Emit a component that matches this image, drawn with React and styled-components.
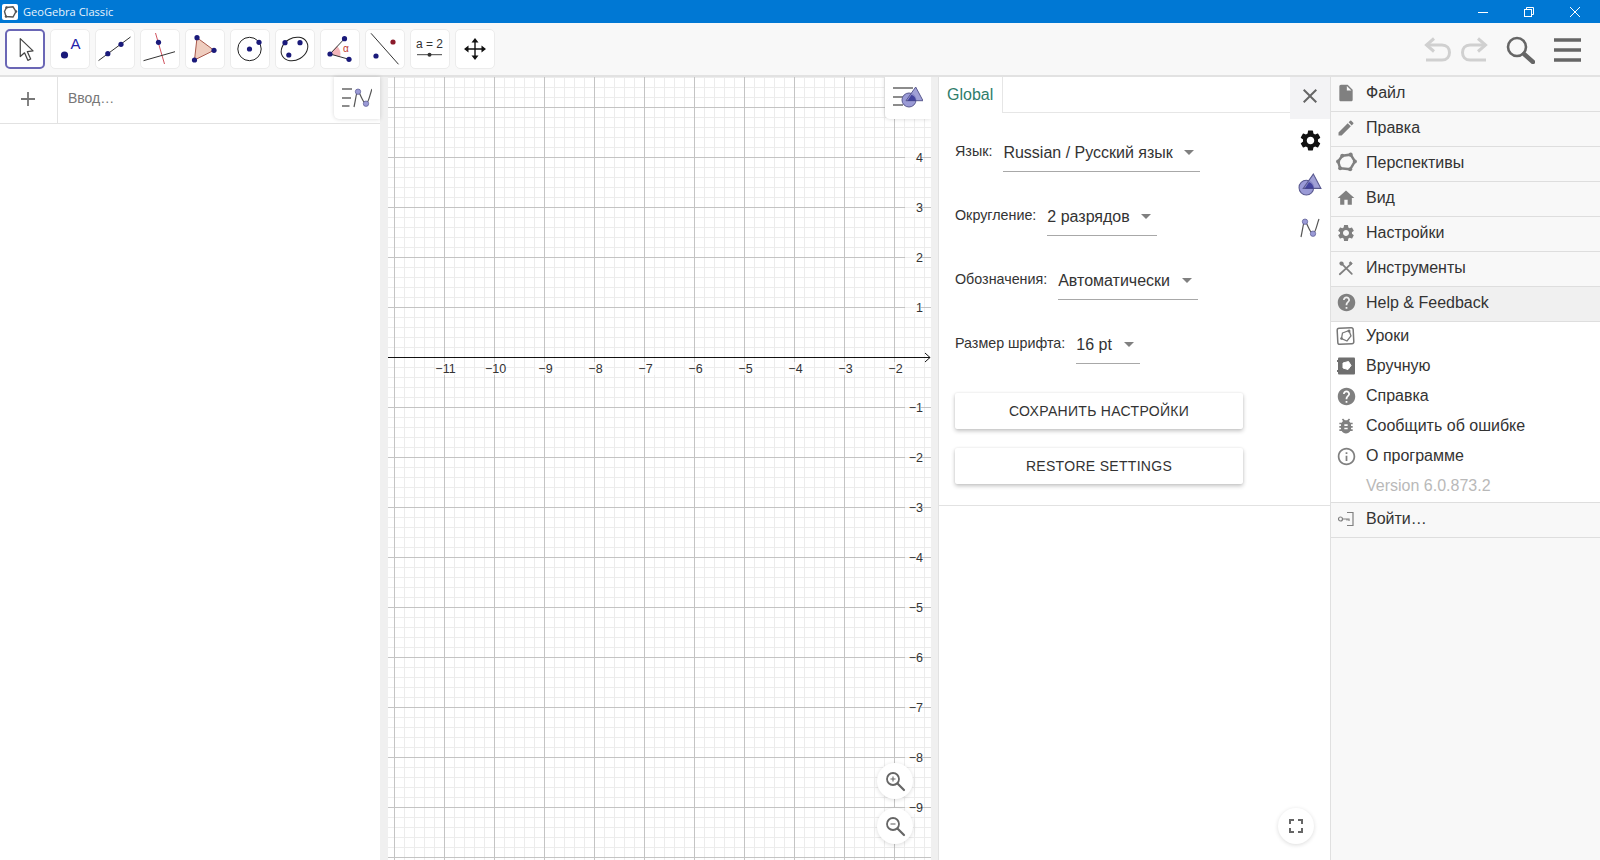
import React from 'react';
import styled, { createGlobalStyle } from 'styled-components';
import { MdInsertDriveFile, MdEdit, MdHome, MdSettings, MdHelp, MdBugReport, MdInfoOutline, MdClose } from 'react-icons/md';

const GlobalStyle = createGlobalStyle`
  html, body { margin: 0; padding: 0; height: 100%; overflow: hidden; background: #fff; }
  #root { height: 100%; }
  * { box-sizing: border-box; }
`;

const NAVY = '#1a1a7a';
const PURPLE = '#9a9ad6';

const Page = styled.div`
  width: 1600px;
  height: 860px;
  display: flex;
  flex-direction: column;
  font-family: "Liberation Sans", Arial, sans-serif;
  color: #333;
`;

const TitleBar = styled.div`
  height: 23px;
  background: #0078d4;
  display: flex;
  align-items: center;
  color: #fff;
  padding: 0 2px;
`;

const TitleText = styled.span`
  font-family: "Open Sans", "Noto Sans", sans-serif;
  font-size: 11.1px;
  margin-left: 5px;
  color: #e8f3fb;
`;

const WindowButtons = styled.div`
  margin-left: auto;
  display: flex;
  align-items: center;
`;

const WindowButton = styled.div`
  width: 46px;
  height: 23px;
  display: flex;
  align-items: center;
  justify-content: center;
`;

const Toolbar = styled.div`
  height: 54px;
  background: #f8f8f8;
  border-bottom: 2px solid #e2e2e2;
  display: flex;
  align-items: flex-start;
  padding: 6px 19px 0 5px;
`;

const ToolGroup = styled.div`
  display: flex;
  gap: 5px;
`;

const ToolButton = styled.div`
  width: 40px;
  height: 40px;
  background: #fff;
  border-radius: 5px;
  border: ${p => (p.$active ? '2px solid #6a66b5' : '1px solid #ececec')};
  display: flex;
  align-items: center;
  justify-content: center;
  flex: none;
`;

const ActionGroup = styled.div`
  margin-left: auto;
  display: flex;
  align-items: center;
  height: 40px;
  margin-top: 1px;
`;

const ActionIcon = styled.svg`
  display: block;
  margin-left: ${p => p.$gap || 0}px;
`;

const Main = styled.div`
  flex: 1;
  display: flex;
  min-height: 0;
`;

const AlgebraPanel = styled.div`
  width: 380px;
  background: #fff;
  flex: none;
`;

const InputRow = styled.div`
  height: 47px;
  display: flex;
  border-bottom: 1px solid #e2e2e2;
  position: relative;
`;

const PlusCell = styled.div`
  width: 58px;
  border-right: 1px solid #e2e2e2;
  display: flex;
  align-items: center;
  justify-content: center;
  padding: 0 1px 2px 0;
`;

const InputHint = styled.div`
  padding-left: 10px;
  line-height: 43px;
  font-size: 14px;
  color: #777;
`;

const StyleButton = styled.div`
  position: absolute;
  top: 0;
  right: 0;
  width: 46px;
  height: 42px;
  background: #fff;
  border-bottom-left-radius: 5px;
  box-shadow: 0 0 4px rgba(0, 0, 0, 0.16);
  display: flex;
  align-items: center;
  justify-content: center;
`;

const Splitter = styled.div`
  width: ${p => p.$width}px;
  background: #f0f0f0;
  flex: none;
`;

const GraphPanel = styled.div`
  width: 543px;
  flex: none;
  position: relative;
  overflow: hidden;
  background: #fff;
`;

const GraphCanvas = styled.svg`
  display: block;
  font-family: "Liberation Sans", Arial, sans-serif;
  font-size: 12.5px;
  fill: #333;
`;

const RoundButton = styled.div`
  position: absolute;
  left: ${p => p.$left}px;
  top: ${p => p.$top}px;
  width: 36px;
  height: 36px;
  border-radius: 50%;
  background: #fff;
  box-shadow: 0 1px 4px rgba(0, 0, 0, 0.14);
  display: flex;
  align-items: center;
  justify-content: center;
`;

const SettingsPanel = styled.div`
  width: 392px;
  flex: none;
  position: relative;
  background: #fff;
  border-left: 1px solid #e2e2e2;
`;

const SettingsTop = styled.div`
  height: 429px;
  display: flex;
  border-bottom: 1px solid #e2e2e2;
`;

const SettingsBody = styled.div`
  flex: 1;
`;

const TabBar = styled.div`
  height: 36px;
  border-bottom: 1px solid #e6e6e6;
  display: flex;
  align-items: flex-end;
`;

const Tab = styled.div`
  width: 64px;
  height: 36px;
  background: #fff;
  border-right: 1px solid #e6e6e6;
  margin-bottom: -1px;
  padding-left: 8px;
  font-size: 16px;
  line-height: 35px;
  color: #2f7d6b;
`;

const Form = styled.div`
  padding: 19px 0 0 16px;
  display: flex;
  flex-direction: column;
  gap: 24px;
`;

const FormRow = styled.div`
  display: flex;
  height: 40px;
`;

const FormLabel = styled.div`
  font-size: 14.3px;
  line-height: 38px;
  margin-right: 11px;
  color: #333;
`;

const Select = styled.div`
  width: ${p => p.$width}px;
  height: 40px;
  border-bottom: 1px solid #a8a8a8;
  display: flex;
  align-items: center;
  justify-content: space-between;
  padding: 0 6px 0 0;
  font-size: 16px;
  color: #333;
`;

const SelectText = styled.span`
  padding-top: 2px;
`;

const Caret = styled.span`
  width: 0;
  height: 0;
  border-left: 5px solid transparent;
  border-right: 5px solid transparent;
  border-top: 5px solid #808080;
  margin-top: 2px;
`;

const ActionButtons = styled.div`
  display: flex;
  flex-direction: column;
  gap: 19px;
  margin-top: 5px;
`;

const FlatButton = styled.button`
  width: 288px;
  height: 36px;
  background: #fff;
  border: none;
  border-radius: 2px;
  box-shadow: 0 2px 4px rgba(0, 0, 0, 0.24), 0 0 2px rgba(0, 0, 0, 0.08);
  font-family: "Liberation Sans", Arial, sans-serif;
  font-size: 14px;
  letter-spacing: 0.3px;
  color: #333;
  padding: 0;
`;

const SideColumn = styled.div`
  width: 40px;
  flex: none;
  display: flex;
  flex-direction: column;
  align-items: center;
`;

const CloseButton = styled.div`
  width: 40px;
  height: 42px;
  background: #f3f3f5;
  display: flex;
  align-items: center;
  justify-content: center;
  padding-bottom: 4px;
`;

const SideIcon = styled.div`
  height: 43.5px;
  display: flex;
  align-items: center;
  justify-content: center;
  color: #111;
`;

const MenuPanel = styled.div`
  flex: 1;
  background: #f8f8f8;
  border-left: 1px solid #e0e0e0;
`;

const MenuRow = styled.div`
  height: 35px;
  display: flex;
  align-items: center;
  background: ${p => (p.$hover ? '#f0f0f0' : 'transparent')};
  border-bottom: 1px solid #dedede;
  padding-bottom: 3px;
  font-size: 16px;
  color: #333;
`;

const SubMenu = styled.div`
  background: #fff;
  height: 181px;
  border-bottom: 1px solid #dedede;
`;

const SubRow = styled.div`
  height: 30px;
  display: flex;
  align-items: center;
  padding-bottom: 2px;
  font-size: 16px;
  color: ${p => (p.$muted ? '#b9b9b9' : '#333')};
`;

const IconCell = styled.span`
  width: 30px;
  height: 20px;
  margin-right: 5px;
  flex: none;
  display: flex;
  align-items: center;
  justify-content: center;
  color: #808080;
`;

const Dot = ({ x, y, r = 2.6, c = NAVY }) => <circle cx={x} cy={y} r={r} fill={c} />;

const toolIcons = [
  <svg width="38" height="38" viewBox="0 0 38 38" key="move">
    <path d="M14 8 L14 27 L18.5 23 L22 31 L25 29.5 L21.5 21.8 L27.5 21 Z" fill="#fff" stroke="#444" strokeWidth="1.3" strokeLinejoin="round" />
  </svg>,
  <svg width="38" height="38" viewBox="1 1 38 38" key="point">
    <Dot x={14.5} y={26} r={3.6} />
    <text x={20.5} y={20} fontSize="15" fontFamily="Liberation Sans, sans-serif" fill="#2222aa">A</text>
  </svg>,
  <svg width="38" height="38" viewBox="1 1 38 38" key="line">
    <path d="M3.5 31.6 L35.5 8" stroke="#333" strokeWidth="1" />
    <Dot x={12.8} y={24.7} />
    <Dot x={26} y={15.3} />
  </svg>,
  <svg width="38" height="38" viewBox="1 1 38 38" key="perp">
    <path d="M15.5 4 L24.5 35" stroke="#d0535f" strokeWidth="1" />
    <path d="M3.5 31.7 L35 22.7" stroke="#333" strokeWidth="1" />
    <Dot x={18.5} y={13.3} />
  </svg>,
  <svg width="38" height="38" viewBox="1 1 38 38" key="poly">
    <path d="M12 8.7 L29 21.3 L9.5 31 Z" fill="#efcdbf" stroke="#a8574a" strokeWidth="1" />
    <Dot x={12} y={8.7} />
    <Dot x={29} y={21.3} />
    <Dot x={9.5} y={31} />
  </svg>,
  <svg width="38" height="38" viewBox="1 1 38 38" key="circle">
    <circle cx="19.5" cy="20" r="11.7" fill="none" stroke="#222" strokeWidth="1" />
    <Dot x={19.5} y={20} />
    <Dot x={29} y={13.3} />
  </svg>,
  <svg width="38" height="38" viewBox="1 1 38 38" key="conic">
    <ellipse cx="19.5" cy="20" rx="14" ry="11" transform="rotate(-30 19.5 20)" fill="none" stroke="#222" strokeWidth="1" />
    <Dot x={10} y={13.7} />
    <Dot x={25} y={13.7} />
    <Dot x={13.8} y={26} />
  </svg>,
  <svg width="38" height="38" viewBox="1 1 38 38" key="angle">
    <path d="M10 25 L17 17 A11 11 0 0 1 20 28 Z" fill="#f4b6bb" />
    <path d="M24.5 9.7 L10 25 L29 30.3" fill="none" stroke="#333" strokeWidth="1" />
    <Dot x={10} y={25} />
    <Dot x={24.5} y={9.7} />
    <Dot x={29} y={30.3} />
    <text x={23} y={23} fontSize="10" fontFamily="Liberation Sans, sans-serif" fill="#c0392b">α</text>
  </svg>,
  <svg width="38" height="38" viewBox="1 1 38 38" key="reflect">
    <path d="M6 4.3 L33.5 35.3" stroke="#333" strokeWidth="1" />
    <Dot x={28} y={13} c="#8b1a2b" />
    <Dot x={11} y={27} />
  </svg>,
  <svg width="38" height="38" viewBox="1 1 38 38" key="slider">
    <text x={19.5} y={19} textAnchor="middle" fontSize="12" fontFamily="Liberation Sans, sans-serif" fill="#333">a = 2</text>
    <path d="M7 25.7 L32 25.7" stroke="#444" strokeWidth="1" />
    <Dot x={19.5} y={25.7} r={2} c="#333" />
  </svg>,
  <svg width="38" height="38" viewBox="1 1 38 38" key="pan">
    <path d="M20 11 V29 M11 20 H29" stroke="#111" strokeWidth="1.4" />
    <path d="M20 9 L16.5 13.5 H23.5 Z M20 31 L16.5 26.5 H23.5 Z M9 20 L13.5 16.5 V23.5 Z M31 20 L26.5 16.5 V23.5 Z" fill="#111" />
  </svg>,
];

const PentagonIcon = ({ size = 21, color = '#808080', width = 2.4 }) => (
  <svg width={size} height={size} viewBox="0 0 20 20">
    <path d="M6 3.5 L14 2.5 L18 9 L13.5 16.5 L4 15.5 L2 9 Z" fill="none" stroke={color} strokeWidth={width} strokeLinejoin="round" />
    {[[6, 3.5], [14, 2.5], [18, 9], [13.5, 16.5], [4, 15.5], [2, 9]].map(([x, y]) => (
      <circle key={`${x}-${y}`} cx={x} cy={y} r={width * 0.8} fill={color} />
    ))}
  </svg>
);

const ToolsIcon = () => (
  <svg width="16" height="16" viewBox="0 0 18 18">
    <path d="M2 16 L15 4 M3 3 L15.5 15.5" stroke="#808080" strokeWidth="2" strokeLinecap="round" />
    <circle cx="4" cy="4" r="2.4" fill="#808080" />
    <path d="M14 1.5 L16.5 4 L14.5 6 L12 3.5 Z" fill="#808080" />
  </svg>
);

const TutorialIcon = () => (
  <svg width="20" height="20" viewBox="0 0 20 20">
    <rect x="1.5" y="2" width="16" height="16" rx="2" fill="none" stroke="#777" strokeWidth="1.5" transform="rotate(-3 10 10)" />
    <path d="M6.5 7 L13 4.5 L15 10 L11 15 L5.5 12.5 Z" fill="none" stroke="#777" strokeWidth="1.3" />
    <circle cx="13" cy="5" r="1.5" fill="#777" />
    <circle cx="5.5" cy="12.5" r="1.3" fill="#777" />
  </svg>
);

const ManualIcon = () => (
  <svg width="20" height="20" viewBox="0 0 20 20">
    <rect x="2" y="1.5" width="17" height="17" rx="1" fill="#6f6f6f" />
    <rect x="1" y="4" width="2.5" height="2" fill="#6f6f6f" />
    <rect x="1" y="14" width="2.5" height="2" fill="#6f6f6f" />
    <path d="M7 7 L12.5 5.5 L15 9.5 L12 13.5 L7 12 Z" fill="#fff" stroke="#fff" strokeWidth="1" />
  </svg>
);

const LoginIcon = () => (
  <svg width="18" height="18" viewBox="0 0 18 18" fill="none" stroke="#808080" strokeWidth="1.2">
    <circle cx="3.5" cy="9" r="2" />
    <path d="M5.5 9 H12 V11 M10 9 V10.5" />
    <path d="M10 2.5 H16 V15.5 H10" />
  </svg>
);

const CurveIcon = ({ lines }) => (
  <svg width={lines ? 30 : 24} height="24" viewBox={lines ? '0 0 30 24' : '9 0 24 24'}>
    {lines && <path d="M0 3 H10 M0 12 H9 M0 20 H7.5" stroke="#8c8c8c" strokeWidth="2.2" fill="none" />}
    <path d="M12 21 C14 12 14.5 5 16 5.7 C18 6 21 18 24 17.7 C26.5 17.7 28 8 30 3" fill="none" stroke="#555" strokeWidth="1.2" />
    <circle cx="16" cy="5.7" r="2.7" fill={PURPLE} stroke="#5a5a90" strokeWidth="0.7" />
    <circle cx="24" cy="17.7" r="2.7" fill={PURPLE} stroke="#5a5a90" strokeWidth="0.7" />
  </svg>
);

const ShapesIcon = ({ lines }) => (
  <svg width={lines ? 30 : 24} height={lines ? 26 : 24} viewBox={lines ? '0 0 30 26' : '8 0 23 23'}>
    {lines && <path d="M0 3 H20 M0 12 H10 M0 20 H10" stroke="#8c8c8c" strokeWidth="2.2" fill="none" />}
    <circle cx="16" cy="15" r="7" fill={PURPLE} stroke="#5a5a90" strokeWidth="1" />
    <path d="M22.7 2 L30 15.7 H13 Z" fill="#8f8fcf" stroke="#5a5a90" strokeWidth="1" fillOpacity="0.85" />
    <path d="M18.5 9.7 L14.5 15.7 H23 A7 7 0 0 0 18.5 9.7 Z" fill="#2a2a8c" fillOpacity="0.75" />
  </svg>
);

const ZoomIcon = ({ plus }) => (
  <svg width="22" height="22" viewBox="0 0 22 22" fill="none" stroke="#666">
    <circle cx="9" cy="9" r="6" strokeWidth="1.8" />
    <path d="M13.5 13.5 L20 20" strokeWidth="2.2" strokeLinecap="round" />
    <path d={plus ? 'M6.5 9 H11.5 M9 6.5 V11.5' : 'M6.5 9 H11.5'} strokeWidth="1.1" />
  </svg>
);

// graph view: the top left corner of the canvas is (388, 77) on the page
const GW = 543;
const GH = 783;
const xMajor = Array.from({ length: 11 }, (_, i) => 6 + i * 50);
const yMajor = Array.from({ length: 16 }, (_, i) => 30 + i * 50);
const xMinor = Array.from({ length: 55 }, (_, i) => 6 + i * 10).filter(v => (v - 6) % 50 !== 0);
const yMinor = Array.from({ length: 80 }, (_, i) => i * 10).filter(v => (v - 30) % 50 !== 0);
const xLabels = [-11, -10, -9, -8, -7, -6, -5, -4, -3, -2];
const yLabels = [4, 3, 2, 1, -1, -2, -3, -4, -5, -6, -7, -8, -9];
const AXIS_Y = 280;
const fmt = n => (n < 0 ? `\u2212${-n}` : `${n}`);

const GraphView = () => (
  <GraphCanvas width={GW} height={GH} viewBox={`0 0 ${GW} ${GH}`}>
    {xMinor.map(x => <path key={x} d={`M${x + 0.5} 0 V${GH}`} stroke="#ececec" />)}
    {yMinor.map(y => <path key={y} d={`M0 ${y + 0.5} H${GW}`} stroke="#ececec" />)}
    {xMajor.map(x => <path key={x} d={`M${x + 0.5} 0 V${GH}`} stroke="#c4c4c4" />)}
    {yMajor.map(y => <path key={y} d={`M0 ${y + 0.5} H${GW}`} stroke="#c4c4c4" />)}
    <path d={`M0 ${AXIS_Y + 0.5} H${GW - 1}`} stroke="#111" />
    <path d={`M${GW - 6} ${AXIS_Y - 4} L${GW - 1} ${AXIS_Y + 0.5} L${GW - 6} ${AXIS_Y + 5}`} stroke="#111" fill="none" />
    {xLabels.map(n => {
      const x = 7.5 + (n + 12) * 50;
      return (
        <g key={n}>
          <rect x={x - 10} y={AXIS_Y + 5} width="20" height="13" fill="#fff" fillOpacity="0.6" />
          <text x={x} y={AXIS_Y + 15.5} textAnchor="middle">{fmt(n)}</text>
        </g>
      );
    })}
    {yLabels.map(n => {
      const y = AXIS_Y - n * 50;
      return (
        <g key={n}>
          <rect x={GW - 26} y={y - 7} width="16" height="14" fill="#fff" fillOpacity="0.7" />
          <text x={GW - 8} y={y + 5} textAnchor="end">{fmt(n)}</text>
        </g>
      );
    })}
  </GraphCanvas>
);

const menuRows = [
  { label: 'Файл', icon: <MdInsertDriveFile size={20} /> },
  { label: 'Правка', icon: <MdEdit size={20} /> },
  { label: 'Перспективы', icon: <PentagonIcon /> },
  { label: 'Вид', icon: <MdHome size={20} /> },
  { label: 'Настройки', icon: <MdSettings size={20} /> },
  { label: 'Инструменты', icon: <ToolsIcon /> },
  { label: 'Help & Feedback', icon: <MdHelp size={21} />, hover: true },
];

const subRows = [
  { label: 'Уроки', icon: <TutorialIcon /> },
  { label: 'Вручную', icon: <ManualIcon /> },
  { label: 'Справка', icon: <MdHelp size={21} /> },
  { label: 'Сообщить об ошибке', icon: <MdBugReport size={20} /> },
  { label: 'О программе', icon: <MdInfoOutline size={21} /> },
  { label: 'Version 6.0.873.2', muted: true },
];

const settings = [
  { label: 'Язык:', value: 'Russian / Русский язык', width: 197 },
  { label: 'Округление:', value: '2 разрядов', width: 110 },
  { label: 'Обозначения:', value: 'Автоматически', width: 140 },
  { label: 'Размер шрифта:', value: '16 pt', width: 64 },
];

export default function App() {
  return (
    <Page>
      <GlobalStyle />
      <TitleBar>
        <svg width="16" height="16" viewBox="0 0 16 16">
          <rect width="16" height="16" rx="2" fill="#fff" />
          <path d="M4.5 3.5 L11 2.8 L14 7.5 L11 13 L4 12.5 L2.5 7.5 Z" fill="none" stroke="#555" strokeWidth="1.4" />
          <circle cx="4.5" cy="3.5" r="1.2" fill="#555" />
          <circle cx="14" cy="7.5" r="1.2" fill="#555" />
          <circle cx="4" cy="12.5" r="1.2" fill="#555" />
        </svg>
        <TitleText>GeoGebra Classic</TitleText>
        <WindowButtons>
          <WindowButton>
            <svg width="12" height="12" viewBox="0 0 12 12"><path d="M1 6.5 H11" stroke="#fff" /></svg>
          </WindowButton>
          <WindowButton>
            <svg width="12" height="12" viewBox="0 0 12 12" fill="none" stroke="#fff">
              <rect x="1.5" y="3.5" width="7" height="7" />
              <path d="M3.5 3.5 V1.5 H10.5 V8.5 H8.5" />
            </svg>
          </WindowButton>
          <WindowButton>
            <svg width="12" height="12" viewBox="0 0 12 12"><path d="M1 1 L11 11 M11 1 L1 11" stroke="#fff" /></svg>
          </WindowButton>
        </WindowButtons>
      </TitleBar>

      <Toolbar>
        <ToolGroup>
          {toolIcons.map((icon, i) => (
            <ToolButton key={i} $active={i === 0}>{icon}</ToolButton>
          ))}
        </ToolGroup>
        <ActionGroup>
          <ActionIcon width="28" height="26" viewBox="0 0 28 26" fill="none" stroke="#d0d0d0" strokeWidth="3">
            <path d="M2.5 8 H18 C28 8 28 23 18 23 H2" />
            <path d="M10 1.5 L2.5 8 L10 14.5" />
          </ActionIcon>
          <ActionIcon $gap={8} width="28" height="26" viewBox="0 0 28 26" fill="none" stroke="#d0d0d0" strokeWidth="3">
            <path d="M25.5 8 H10 C0 8 0 23 10 23 H26" />
            <path d="M18 1.5 L25.5 8 L18 14.5" />
          </ActionIcon>
          <ActionIcon $gap={18} width="29" height="28" viewBox="0 0 29 28" fill="none" stroke="#666">
            <circle cx="11" cy="11" r="9" strokeWidth="2.6" />
            <path d="M18 18 L27 26" strokeWidth="4.4" strokeLinecap="round" />
          </ActionIcon>
          <ActionIcon $gap={19} width="27" height="24" viewBox="0 0 27 24" stroke="#666" strokeWidth="3.4">
            <path d="M0 2 H27 M0 12 H27 M0 22 H27" />
          </ActionIcon>
        </ActionGroup>
      </Toolbar>

      <Main>
        <AlgebraPanel>
          <InputRow>
            <PlusCell>
              <svg width="16" height="16" viewBox="0 0 16 16"><path d="M8 1 V15 M1 8 H15" stroke="#777" strokeWidth="1.8" /></svg>
            </PlusCell>
            <InputHint>Ввод…</InputHint>
            <StyleButton><CurveIcon lines /></StyleButton>
          </InputRow>
        </AlgebraPanel>
        <Splitter $width={8} />
        <GraphPanel>
          <GraphView />
          <StyleButton><ShapesIcon lines /></StyleButton>
          <RoundButton $left={489} $top={686}><ZoomIcon plus /></RoundButton>
          <RoundButton $left={489} $top={731}><ZoomIcon /></RoundButton>
        </GraphPanel>
        <Splitter $width={7} />
        <SettingsPanel>
          <SettingsTop>
            <SettingsBody>
              <TabBar><Tab>Global</Tab></TabBar>
              <Form>
                {settings.map(s => (
                  <FormRow key={s.label}>
                    <FormLabel>{s.label}</FormLabel>
                    <Select $width={s.width}>
                      <SelectText>{s.value}</SelectText>
                      <Caret />
                    </Select>
                  </FormRow>
                ))}
                <ActionButtons>
                  <FlatButton>СОХРАНИТЬ НАСТРОЙКИ</FlatButton>
                  <FlatButton>RESTORE SETTINGS</FlatButton>
                </ActionButtons>
              </Form>
            </SettingsBody>
            <SideColumn>
              <CloseButton><MdClose size={24} color="#666" /></CloseButton>
              <SideIcon><MdSettings size={25} /></SideIcon>
              <SideIcon><ShapesIcon /></SideIcon>
              <SideIcon><CurveIcon /></SideIcon>
            </SideColumn>
          </SettingsTop>
          <RoundButton $left={339} $top={731}>
            <svg width="14" height="14" viewBox="0 0 14 14" fill="none" stroke="#666" strokeWidth="2">
              <path d="M1 5 V1 H5 M9 1 H13 V5 M13 9 V13 H9 M5 13 H1 V9" />
            </svg>
          </RoundButton>
        </SettingsPanel>
        <MenuPanel>
          {menuRows.map(r => (
            <MenuRow key={r.label} $hover={r.hover}>
              <IconCell>{r.icon}</IconCell>
              {r.label}
            </MenuRow>
          ))}
          <SubMenu>
            {subRows.map(r => (
              <SubRow key={r.label} $muted={r.muted}>
                <IconCell>{r.icon}</IconCell>
                {r.label}
              </SubRow>
            ))}
          </SubMenu>
          <MenuRow>
            <IconCell><LoginIcon /></IconCell>
            Войти…
          </MenuRow>
        </MenuPanel>
      </Main>
    </Page>
  );
}
